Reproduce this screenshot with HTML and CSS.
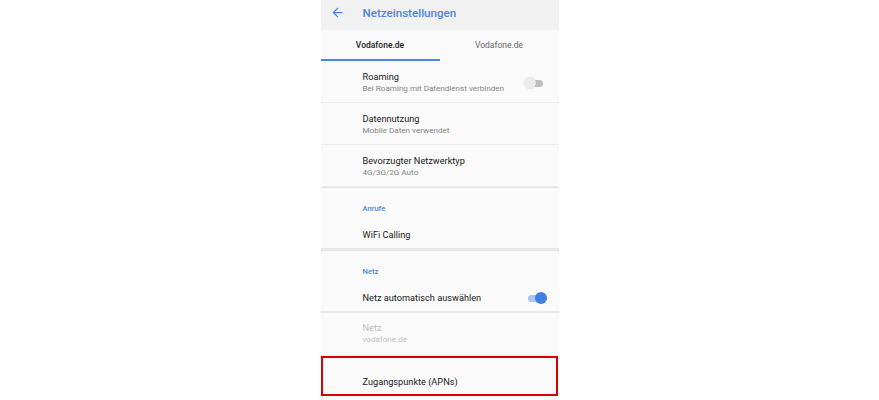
FILE: index.html
```html
<!DOCTYPE html>
<html lang="de">
<head>
<meta charset="utf-8">
<link rel="stylesheet" href="styles.css">
</head>
<body>
<div class="stage">
  <div class="phone">
    <header class="appbar">
      <svg class="back" width="15" height="15" viewBox="0 0 24 24"><path d="M20 11H7.83l5.59-5.59L12 4l-8 8 8 8 1.41-1.41L7.83 13H20v-2z" fill="#4a86e8"/></svg>
      <span class="appbar-title">Netzeinstellungen</span>
    </header>
    <nav class="tabs">
      <div class="tab active">Vodafone.de</div>
      <div class="tab">Vodafone.de</div>
    </nav>
    <div class="list">
      <div class="row two">
        <div class="text">
          <div class="title">Roaming</div>
          <div class="sub">Bei Roaming mit Datendienst verbinden</div>
        </div>
        <div class="switch off"><span class="track"></span><span class="thumb"></span></div>
      </div>
      <div class="row two">
        <div class="text">
          <div class="title">Datennutzung</div>
          <div class="sub">Mobile Daten verwendet</div>
        </div>
      </div>
      <div class="row two">
        <div class="text">
          <div class="title">Bevorzugter Netzwerktyp</div>
          <div class="sub">4G/3G/2G Auto</div>
        </div>
      </div>
      <div class="group">
        <div class="cat">Anrufe</div>
        <div class="row one"><div class="text"><div class="title">WiFi Calling</div></div></div>
      </div>
      <div class="group">
        <div class="cat">Netz</div>
        <div class="row one">
          <div class="text"><div class="title">Netz automatisch auswählen</div></div>
          <div class="switch on"><span class="track"></span><span class="thumb"></span></div>
        </div>
      </div>
      <div class="row two disabled">
        <div class="text">
          <div class="title">Netz</div>
          <div class="sub">vodafone.de</div>
        </div>
      </div>
      <div class="row last">
        <div class="text"><div class="title">Zugangspunkte (APNs)</div></div>
        <div class="highlight"></div>
      </div>
    </div>
  </div>
</div>
</body>
</html>
```

FILE: styles.css
```css
* { box-sizing: border-box; margin: 0; padding: 0; }
html, body { background: #ffffff; }
body { font-family: Roboto, "Noto Sans", sans-serif; color: #212121; overflow: hidden; height: 400px; }
.stage { display: flex; justify-content: center; }
.phone { width: 238px; background: #fafafa; height: 400px; }

.appbar { height: 30px; background: #f1f1f1; display: flex; align-items: center; padding-left: 9px; padding-bottom: 5px; }
.back { margin-right: 18px; }
.appbar-title { color: #4a86e8; font-size: 11.6px; font-weight: 500; }

.tabs { height: 31px; display: flex; background: #fafafa; }
.tab { flex: 1; display: flex; align-items: center; justify-content: center; font-size: 8.5px; color: #666; border-bottom: 2px solid transparent; padding-top: 1px; }
.tab.active { color: #212121; font-weight: 500; border-bottom-color: #4a86e8; }

.list { display: flex; flex-direction: column; }
.row { position: relative; display: flex; align-items: center; padding-left: 42px; padding-right: 12px; border-bottom: 1px solid #ececec; }
.row.two { height: 42px; }
.row.one { height: 27px; border-bottom: none; }
.row.last { height: 50px; border-bottom: none; }
.row.disabled { height: 43px; padding-bottom: 3px; }
.text { flex: 1; display: flex; flex-direction: column; gap: 1px; }
.title { font-size: 9.2px; line-height: 11px; color: #212121; }
.sub { font-size: 8.1px; line-height: 10px; color: #858585; }
.disabled .title, .disabled .sub { color: #bdbdbd; }

.group { border-top: 1px solid #e4e4e4; border-bottom: 2px solid #e8e8e8; display: flex; flex-direction: column; }
.cat { height: 33px; padding-left: 42px; padding-top: 16px; font-size: 7.6px; line-height: 9px; font-weight: 500; color: #4a86e8; }

.switch { position: relative; width: 21px; height: 12px; }
.switch .track { position: absolute; left: 2px; right: 2px; top: 3px; height: 7px; border-radius: 4px; }
.switch .thumb { position: absolute; top: 0; width: 12px; height: 12px; border-radius: 50%; }
.switch.off { margin-right: 2px; margin-top: 3px; }
.switch.off .track { background: #bdbdbd; }
.switch.off .thumb { left: 0; background: #ececec; box-shadow: 0 0 1px rgba(0,0,0,0.15); }
.switch.on { margin-right: 0; margin-top: 0; }
.switch.on .track { background: #aac6f2; }
.switch.on .thumb { right: 0; background: #3f7fe0; }

.highlight { position: absolute; left: 0; right: 1px; top: 0; height: 40px; border: 2px solid #d90000; pointer-events: none; }
```
